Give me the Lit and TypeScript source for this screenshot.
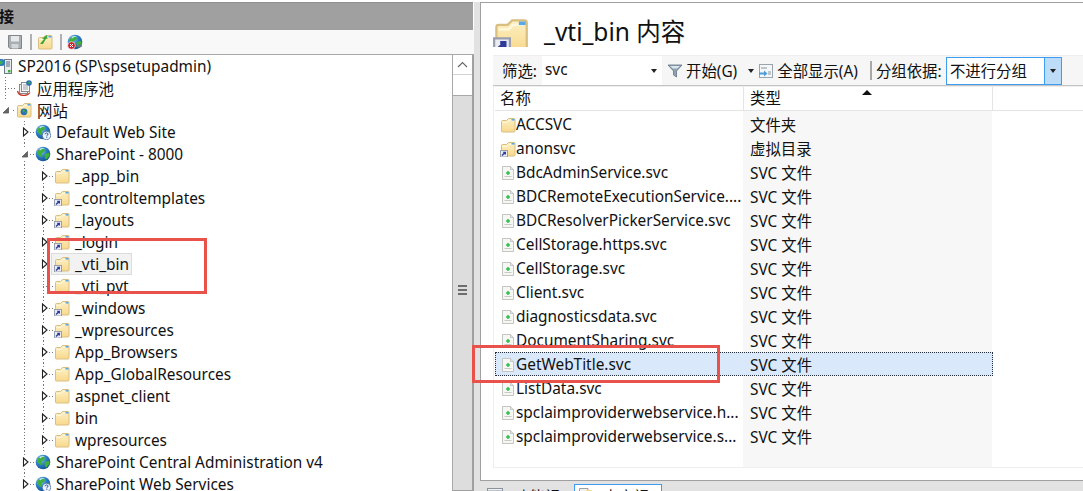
import { LitElement, html, css, svg } from "lit";
import { customElement } from "lit/decorators.js";

const folderShape = svg`
  <defs><linearGradient id="fg" x1="0" y1="0" x2="0" y2="1"><stop offset="0" stop-color="#fdf0c4"/><stop offset="1" stop-color="#f8d98c"/></linearGradient></defs>
  <path d="M1.5 4.5 Q1.5 3.5 2.5 3.5 H6.5 L8.5 1.5 H14 Q15 1.5 15 2.5 V14 Q15 15 14 15 H2.5 Q1.5 15 1.5 14 Z" fill="url(#fg)" stroke="#d8bf80"/>
  <path d="M2.5 5.5 H7 L9 3.5 H14" fill="none" stroke="#fff8e0"/>
  <rect x="11.5" y="2" width="3" height="1.6" fill="#58a8e8"/>`;
const shortcutBadge = svg`
  <rect x="0.5" y="9.5" width="7" height="6.5" fill="#e9ecf3" stroke="#9a9fb0"/>
  <path d="M2 14.4 L5 11.6 M3.2 11.4 H5.3 V13.4" fill="none" stroke="#2f3b96" stroke-width="1.4"/>`;
const globeShape = svg`
  <defs><radialGradient id="gg" cx="0.35" cy="0.3" r="0.8"><stop offset="0" stop-color="#8fd0f5"/><stop offset="0.5" stop-color="#2a7cc4"/><stop offset="1" stop-color="#114a8c"/></radialGradient></defs>
  <circle cx="8" cy="8" r="7.3" fill="url(#gg)"/>
  <path d="M3.5 4 Q6.5 1.8 9.5 3 L9.5 6 L6.5 7.2 L7.5 10.5 L5.5 11 L1.8 7 Z M9.5 8 L14 6.8 L14.8 9.5 L11.5 13.5 L9.8 12 Z" fill="#3fb13a"/>
  <path d="M4.5 3 Q7 1.4 10 2.2 Q7 2.8 5 4.4 Z" fill="#dff1fc" opacity="0.85"/>`;

const icons: Record<string, unknown> = {
  folder: svg`<svg class="ico" viewBox="0 0 16 16">${folderShape}</svg>`,
  shortcut: svg`<svg class="ico" viewBox="0 0 16 16">${folderShape}${shortcutBadge}</svg>`,
  globe: svg`<svg class="ico" viewBox="0 0 16 16">${globeShape}</svg>`,
  globeq: svg`<svg class="ico" viewBox="0 0 16 16">${globeShape}
    <circle cx="11.5" cy="11.5" r="4.2" fill="#eef3fb" stroke="#4a6fa8" stroke-width="0.8"/>
    <path d="M10 10.3 Q10.3 9 11.6 9 Q13 9 13 10.2 Q13 11 11.8 11.6 V12.4 M11.8 13.2 V14" fill="none" stroke="#1f4f9a" stroke-width="1"/></svg>`,
  server: svg`<svg class="ico" viewBox="0 0 16 16">
    <rect x="6.5" y="1.5" width="7" height="14" fill="#e6ebee" stroke="#6f7c85"/>
    <path d="M8 4 H12 M8 6 H12 M8 8 H12" stroke="#5d6b75"/><rect x="10" y="12" width="2.5" height="2.5" fill="#3fae3f"/>
    <circle cx="3.5" cy="4.5" r="3.6" fill="#2a7cc4"/><path d="M1 3.5 L3.8 2 L4.8 5 L2.4 6.8 Z" fill="#45b045"/></svg>`,
  pool: svg`<svg class="ico" viewBox="0 0 16 16">
    <rect x="3.5" y="4.5" width="8" height="9" fill="#f3f3f3" stroke="#8a8a8a"/>
    <rect x="5.5" y="2.5" width="8" height="9" fill="#fafafa" stroke="#8a8a8a"/>
    <path d="M7 5 H12 M7 7 H12 M7 9 H12" stroke="#9aa0a8"/>
    <circle cx="13" cy="3" r="2.8" fill="#2a6fb5"/><path d="M12 2 L14 1.5 L14.5 3.5 L12.5 4 Z" fill="#3fae3f"/>
    <path d="M1.5 11 Q2.5 15.5 8 15.5 Q12 15.5 14 12.5" fill="none" stroke="#c83a2e" stroke-width="1.3"/></svg>`,
  sites: svg`<svg class="ico" viewBox="0 0 16 16">${folderShape}
    <circle cx="8" cy="9.8" r="3.4" fill="#2a6fb5"/><path d="M6.5 8 L9 7.5 L8.5 10 L7 10.5 Z M9 10 L11 9.5 L10 12 Z" fill="#3fae3f"/></svg>`,
  svc: svg`<svg class="ico" viewBox="0 0 16 16">
    <path d="M2.5 1.5 H10.5 L13.5 4.5 V14.5 H2.5 Z" fill="#f6f6f4" stroke="#c4c4c0"/>
    <path d="M10.5 1.5 V4.5 H13.5" fill="#e6e6e2" stroke="#c4c4c0"/>
    <path d="M4.5 11.5 H11.5" stroke="#c9c9c5"/>
    <path d="M6 8 H10 M8 6 V10" stroke="#2fbf4f" stroke-width="1.5"/></svg>`,
};

const closedTri = svg`<svg class="tri" viewBox="0 0 8 10"><path d="M1.5 1 L6 5 L1.5 9 Z" fill="#fff" stroke="#222" stroke-width="1.1"/></svg>`;
const openTri = svg`<svg class="tri" viewBox="0 0 8 10"><path d="M5.5 2.5 V8 H0 Z" fill="#666" stroke="#555" stroke-width="0.8"/></svg>`;

interface TreeNode {
  level: number; label: string; icon: string;
  exp?: "open" | "closed"; guides?: number[]; tail?: boolean; active?: boolean;
}

const lv3 = (label: string, icon: string): TreeNode => ({
  level: 3, label, icon, exp: "closed", guides: [1],
});

const tree: TreeNode[] = [
  { level: 0, label: "SP2016 (SP\\spsetupadmin)", icon: "server" },
  { level: 1, label: "应用程序池", icon: "pool", tail: true },
  { level: 1, label: "网站", icon: "sites", exp: "open" },
  { level: 2, label: "Default Web Site", icon: "globeq", exp: "closed" },
  { level: 2, label: "SharePoint - 8000", icon: "globe", exp: "open" },
  lv3("_app_bin", "folder"),
  lv3("_controltemplates", "shortcut"),
  lv3("_layouts", "shortcut"),
  lv3("_login", "shortcut"),
  { ...lv3("_vti_bin", "shortcut"), active: true },
  { level: 3, label: "_vti_pvt", icon: "folder", guides: [1], tail: true },
  lv3("_windows", "shortcut"),
  lv3("_wpresources", "shortcut"),
  lv3("App_Browsers", "folder"),
  lv3("App_GlobalResources", "folder"),
  lv3("aspnet_client", "folder"),
  lv3("bin", "folder"),
  lv3("wpresources", "folder"),
  { level: 2, label: "SharePoint Central Administration v4", icon: "globe", exp: "closed" },
  { level: 2, label: "SharePoint Web Services", icon: "globeq", exp: "closed" },
];

const files: [string, string, string][] = [
  ["ACCSVC", "文件夹", "folder"],
  ["anonsvc", "虚拟目录", "shortcut"],
  ["BdcAdminService.svc", "SVC 文件", "svc"],
  ["BDCRemoteExecutionService....", "SVC 文件", "svc"],
  ["BDCResolverPickerService.svc", "SVC 文件", "svc"],
  ["CellStorage.https.svc", "SVC 文件", "svc"],
  ["CellStorage.svc", "SVC 文件", "svc"],
  ["Client.svc", "SVC 文件", "svc"],
  ["diagnosticsdata.svc", "SVC 文件", "svc"],
  ["DocumentSharing.svc", "SVC 文件", "svc"],
  ["GetWebTitle.svc", "SVC 文件", "svc"],
  ["ListData.svc", "SVC 文件", "svc"],
  ["spclaimproviderwebservice.h...", "SVC 文件", "svc"],
  ["spclaimproviderwebservice.s...", "SVC 文件", "svc"],
];

@customElement("app-root")
export class AppRoot extends LitElement {
  static styles = css`
    :host {
      display: block; position: relative; width: 1083px; height: 491px; overflow: hidden;
      background: #fff; color: #111;
      font-family: "Noto Sans", "Noto Sans CJK SC", sans-serif; font-size: 15.4px;
    }
    * { box-sizing: border-box; }
    .ico { width: 16px; height: 16px; flex: none; display: block; }
    .tri { width: 8px; height: 10px; display: block; }
    .page { display: grid; grid-template-columns: 474px 1fr; height: 491px; padding-top: 2px; }

    .left { display: flex; flex-direction: column; height: 489px; min-width: 0; }
    .title { height: 28px; flex: none; background: #a0a0a0; font-weight: 700; line-height: 27px; overflow: hidden; font-size: 15px; margin-right: 1px; border-top: 1px solid #8f8f8f; }
    .title span { display: block; margin-left: -16px; }
    .tools { height: 25px; flex: none; background: #f8f8f8; border-bottom: 1px solid #a8a8a8; display: flex; align-items: center; padding-left: 7px; }
    .tools i { width: 2px; height: 16px; background: #b0b0b0; margin: 0 5px 0 7px; }
    .body { flex: 1; display: flex; min-height: 0; }
    .tree { flex: 1; min-width: 0; overflow: hidden; }
    .row { display: flex; align-items: center; height: 22px; white-space: nowrap; }
    .cell { width: 19px; height: 22px; flex: none; }
    .guide { background: repeating-linear-gradient(#777 0 1px, transparent 1px 3px) 5px 0 / 1px 100% no-repeat; }
    .node { width: 15px; height: 22px; flex: none; display: flex; align-items: center; padding-left: 3px;
      background: repeating-linear-gradient(90deg, #777 0 1px, transparent 1px 3px) 10px 11px / 6px 1px no-repeat; }
    .node.line { background:
      repeating-linear-gradient(90deg, #777 0 1px, transparent 1px 3px) 5px 11px / 11px 1px no-repeat,
      repeating-linear-gradient(#777 0 1px, transparent 1px 3px) 5px 0 / 1px 100% no-repeat; }
    .node .tri { background: #fff; }
    .item { display: flex; align-items: center; gap: 5px; height: 22px; padding: 0 2px; margin-left: -2px; border: 1px solid transparent; }
    .item.active { background: #f2f2f2; border-color: #dcdcdc; }
    .item.root { margin-left: -3px; gap: 4px; padding: 0; }

    .sb { width: 22px; flex: none; display: flex; flex-direction: column; border-left: 1px solid #a8a8a8; border-right: 2px solid #a0a0a0; border-bottom: 1px solid #a0a0a0; }
    .sb-btn { height: 20px; background: #fff; border-bottom: 1px solid #d4d4d4; display: flex; align-items: center; justify-content: center; }
    .sb-btn svg { width: 11px; height: 7px; }
    .sb-track { height: 21px; background: #fff; border-bottom: 1px solid #a8a8a8; }
    .sb-thumb { flex: 1; background: #dddddd; display: flex; flex-direction: column; align-items: center; justify-content: center; gap: 2px; padding-bottom: 6px; }
    .sb-thumb b { width: 9px; height: 2px; background: #6d6d6d; display: block; }

    .right { display: flex; flex-direction: column; min-width: 0; background: #e2e2e2; padding-left: 6px; }
    .panel { height: 479px; flex: none; background: #fff; border-left: 1px solid #a0a0a0; border-top: 1px solid #a0a0a0; border-bottom: 1px solid #a0a0a0; padding-left: 12px; display: flex; flex-direction: column; }
    .head { height: 52px; flex: none; display: flex; padding-top: 14px; gap: 15px; overflow: hidden; }
    .big { width: 36px; height: 30px; flex: none; overflow: hidden; }
    .big svg { width: 36px; height: 36px; display: block; }
    .head h1 { margin: 0; font-weight: 400; font-size: 24.5px; line-height: 30px; color: #111; white-space: nowrap; }
    .bar { height: 31px; flex: none; display: flex; align-items: center; background: #f6f6f6; border-top: 1px solid #eeeeee; border-bottom: 1px solid #c4c4c4; padding-left: 9px; white-space: nowrap; }
    .lab { width: 40px; flex: none; }
    .inp { width: 120px; height: 29px; background: #fff; padding-left: 3px; line-height: 28px; position: relative; flex: none; }
    .caret { width: 0; height: 0; border: 3px solid transparent; border-top: 4px solid #222; border-bottom: 0; flex: none; display: block; }
    .inp .caret { position: absolute; right: 5px; top: 13px; }
    .b { display: flex; align-items: center; flex: none; }
    .bar svg { width: 16px; height: 16px; flex: none; display: block; }
    .filter { margin-left: 5px; }
    .t-lab { margin-left: 3px; }
    .c1 { margin-left: 11px; }
    .showall { margin-left: 4px; }
    .sep { width: 2px; height: 19px; background: #a8a8a8; margin: 0 4px 0 12px; flex: none; }
    .group { width: 70px; flex: none; }
    .combo { width: 116px; height: 28px; border: 1px solid #3e9cf2; background: #fff; display: flex; align-items: center; padding-left: 3px; flex: none; }
    .combo span { flex: 1; }
    .combo em { width: 17px; height: 26px; background: #bcdcf8; border-left: 1px solid #3e9cf2; display: flex; align-items: center; justify-content: center; flex: none; }

    .list { width: 590px; height: 382px; flex: none; border-left: 1px solid #eeeeee; border-bottom: 1px solid #eeeeee; padding-left: 1px; position: relative; display: flex; flex-direction: column; background: linear-gradient(90deg, #fff 249px, #f7f7f7 249px 498px, #fff 498px); }
    .thead { height: 25px; flex: none; display: grid; grid-template-columns: 249px 249px 1fr; background: #fff; border-bottom: 1px solid #e4e4e4; border-top: 1px solid #eeeeee; margin-bottom: 1px; }
    .thead div { border-right: 1px solid #e4e4e4; padding-left: 5px; line-height: 23px; position: relative; }
    .thead div:nth-child(2) { padding-left: 6px; }
    .thead .last { border: 0; }
    .sort { position: absolute; left: 118px; top: 3px; width: 0; height: 0; border: 5px solid transparent; border-bottom: 5px solid #111; border-top: 0; }
    .trow { height: 24px; display: grid; grid-template-columns: 249px 249px; align-items: center; white-space: nowrap; width: 498px; border: 1px solid transparent; }
    .trow.sel { background: #d9e8fb; border: 1px dotted #26303d; }
    .nm { display: flex; align-items: center; padding-left: 4px; }
    .ty { padding-left: 5px; }

    .tabs { flex: 1; display: flex; align-items: flex-start; overflow: hidden; padding-left: 7px; }
    .tab { display: flex; align-items: flex-start; flex: none; height: 12px; }
    .tab svg { width: 16px; height: 16px; display: block; flex: none; }
    .tab span { line-height: 20px; }
    .t1 { gap: 11px; width: 87px; padding-top: 7px; }
    .t2 { gap: 9px; width: 88px; padding: 3px 0 0 3px; background: #fff; border: 1px solid #3e9cf2; border-bottom: 0; margin-top: 3px; }

    .mark { position: absolute; border: 3.5px solid #e9524a; pointer-events: none; }
    .m1 { left: 47px; top: 238px; width: 160px; height: 56px; }
    .m2 { left: 472px; top: 345px; width: 248px; height: 38px; }
  `;

  private treeRow(n: TreeNode) {
    if (n.level === 0) {
      return html`<div class="row"><div class="item root">${icons[n.icon]}<span>${n.label}</span></div></div>`;
    }
    const cells = [];
    for (let i = 0; i < n.level - 1; i++) {
      const g = (n.guides ?? []).includes(i);
      cells.push(html`<div class="cell ${g ? "guide" : ""}"></div>`);
    }
    const line = n.tail || n.level >= 2 || !n.exp;
    const tri = n.exp === "open" ? openTri : n.exp === "closed" ? closedTri : "";
    return html`<div class="row">${cells}
      <div class="node ${line ? "line" : ""}">${tri}</div>
      <div class="item ${n.active ? "active" : ""}">${icons[n.icon]}<span>${n.label}</span></div>
    </div>`;
  }

  render() {
    return html`
      <div class="page">
        <section class="left">
          <div class="title"><span>连接</span></div>
          <div class="tools">
            <svg class="ico" viewBox="0 0 16 16"><path d="M1.5 1.5 H14.5 V14.5 H3 L1.5 13 Z" fill="#a8aeb2" stroke="#7f8589"/><rect x="4" y="2" width="8" height="5.5" fill="#e6e8ea"/><rect x="4.5" y="10" width="7" height="4.5" fill="#d4d7d9"/></svg>
            <i></i>
            <svg class="ico" viewBox="0 0 16 16">${folderShape}<path d="M3 10 L7 5 L5 4.5 L10 1 L10.5 5 L9 4.8 L6 10 Z" fill="#3fa535"/></svg>
            <i></i>
            <svg class="ico" viewBox="0 0 16 16">${globeShape}<circle cx="4.5" cy="11.5" r="3.8" fill="#c8202c" stroke="#fff" stroke-width="0.6"/><path d="M3 10 L6 13 M6 10 L3 13" stroke="#fff"/><path d="M9 12 H15 M12.5 10 V14" stroke="#6b7680" stroke-width="1.5"/></svg>
          </div>
          <div class="body">
            <div class="tree">${tree.map((n) => this.treeRow(n))}</div>
            <div class="sb">
              <div class="sb-btn"><svg viewBox="0 0 11 7"><path d="M1 6 L5.5 1.5 L10 6" fill="none" stroke="#666" stroke-width="1.1"/></svg></div>
              <div class="sb-track"></div>
              <div class="sb-thumb"><b></b><b></b><b></b></div>
            </div>
          </div>
        </section>
        <section class="right">
          <div class="panel">
            <div class="head">
              <div class="big"><svg viewBox="0 0 16 16">${folderShape}${shortcutBadge}</svg></div>
              <h1>_vti_bin 内容</h1>
            </div>
            <div class="bar">
              <span class="lab">筛选:</span>
              <div class="inp">svc<span class="caret"></span></div>
              <div class="b">
                <svg class="filter" viewBox="0 0 16 16"><path d="M1 2 H15 L9.5 8 V14 L6.5 12 V8 Z" fill="#8fa3b3" stroke="#5f7383" stroke-width="0.8"/><path d="M3 3 H13 L10 5.5 H6 Z" fill="#dce6ee"/></svg>
                <span class="t-lab">开始(G)</span>
                <span class="caret c1"></span>
                <svg class="showall" viewBox="0 0 16 16"><rect x="1.5" y="1.5" width="13" height="13" fill="#f4f6f8" stroke="#9aa4ae"/><path d="M3 5 H9 M10 9 H13 M10 11 H13" stroke="#8a949e"/><path d="M1 9.5 H6 V7.5 L9.5 10.5 L6 13.5 V11.5 H1 Z" fill="#4e9bd8"/></svg>
                <span class="t-lab">全部显示(A)</span>
              </div>
              <span class="sep"></span>
              <span class="group">分组依据:</span>
              <div class="combo"><span>不进行分组</span><em><i class="caret"></i></em></div>
            </div>
            <div class="list">
              <div class="thead">
                <div>名称</div>
                <div>类型<span class="sort"></span></div>
                <div class="last"></div>
              </div>
              ${files.map(
                (f, i) => html`<div class="trow ${i === 10 ? "sel" : ""}">
                  <div class="nm">${icons[f[2]]}<span>${f[0]}</span></div>
                  <div class="ty">${f[1]}</div>
                </div>`
              )}
            </div>
          </div>
          <div class="tabs">
            <div class="tab t1"><svg viewBox="0 0 16 16"><rect x="0.5" y="0.5" width="15" height="15" fill="#eef0f2" stroke="#8a949e"/><path d="M0.5 3 H15.5" stroke="#8a949e"/></svg><span>功能视图</span></div>
            <div class="tab t2"><svg viewBox="0 0 16 16"><path d="M1.5 0.5 H10 V15 H1.5 Z" fill="#f2f2f2" stroke="#9aa0a6"/><rect x="8" y="2" width="6" height="5" fill="#f4d98a"/></svg><span>内容视图</span></div>
          </div>
        </section>
      </div>
      <div class="mark m1"></div>
      <div class="mark m2"></div>
    `;
  }
}
